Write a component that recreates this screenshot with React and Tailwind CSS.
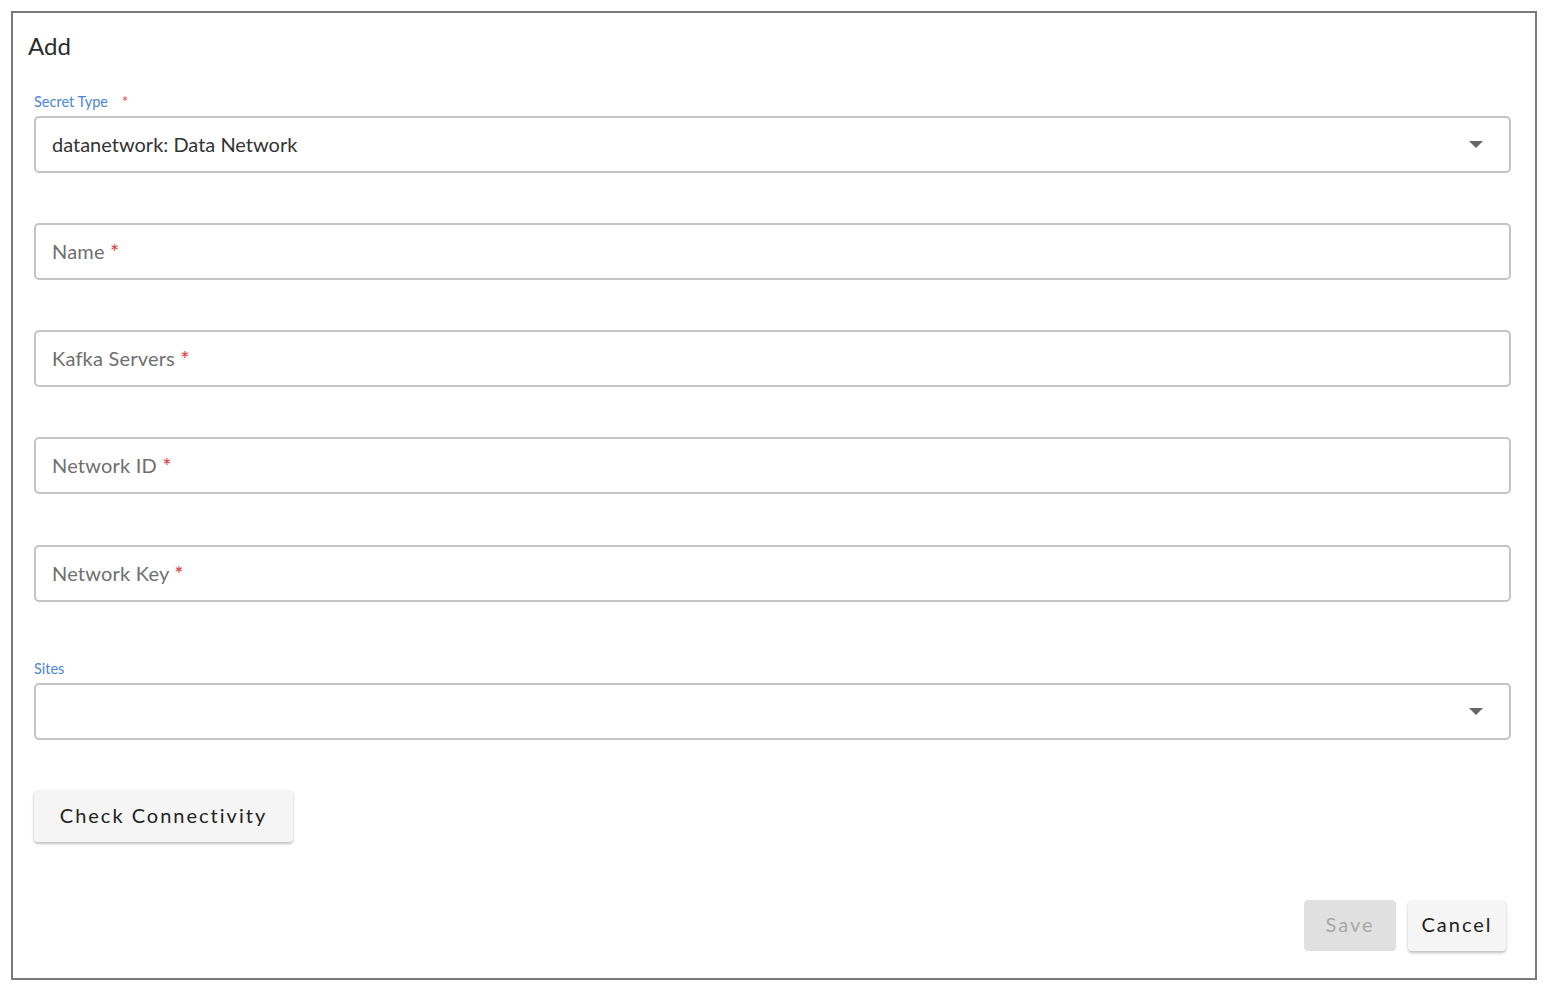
import React from "react";

const font = { fontFamily: "Lato, 'Open Sans', sans-serif" };

function Caret() {
  return (
    <svg width="14" height="8" viewBox="0 0 14 8" className="shrink-0">
      <path d="M0 0 L14 0 L7 7 Z" fill="#666" />
    </svg>
  );
}

function Field({ label, className = "" }) {
  return (
    <div
      className={`h-[57px] border-2 border-[#c4c4c4] rounded-[5px] flex items-center pl-4 ${className}`}
    >
      <span className="text-[20px] text-[#6f6f6f] tracking-[0.2px] -translate-y-[1.5px]">
        {label} <span className="text-[#e53935] text-[22px] relative top-[1px]">*</span>
      </span>
    </div>
  );
}

export default function App() {
  return (
    <div className="w-[1550px] h-[992px] bg-white p-[11px]" style={font}>
      <div className="h-[969px] w-[1526px] border-2 border-[#7a7a7a] pl-[21px] pr-[24px] pt-[19px] flex flex-col">
        <div className="text-[24px] leading-[28px] text-[#2b2b2b] -ml-[6px]">Add</div>

        <div className="mt-[34px] mb-[6px] text-[14.5px] leading-[16px] text-[#4a86d8] flex">
          <span>Secret Type</span>
          <span className="text-[#e53935] ml-[14px]">*</span>
        </div>
        <div className="h-[57px] border-2 border-[#c4c4c4] rounded-[5px] flex items-center pl-4 pr-[26px] justify-between">
          <span className="text-[20px] text-[#333] -translate-y-[1.5px]">datanetwork: Data Network</span>
          <Caret />
        </div>

        <Field label="Name" className="mt-[50px]" />
        <Field label="Kafka Servers" className="mt-[50px]" />
        <Field label="Network ID" className="mt-[50px]" />
        <Field label="Network Key" className="mt-[51px]" />

        <div className="mt-[59px] mb-[6px] text-[14.5px] leading-[16px] text-[#4a86d8]">Sites</div>
        <div className="h-[57px] border-2 border-[#c4c4c4] rounded-[5px] flex items-center justify-end pr-[26px]">
          <Caret />
        </div>

        <div className="mt-[50px]">
          <button className="h-[52px] w-[259px] pb-[3px] bg-[#f5f5f5] rounded-[4px] shadow-[0_2px_3px_rgba(0,0,0,0.25)] text-[20px] tracking-[2px] text-[#222]">
            Check Connectivity
          </button>
        </div>

        <div className="mt-[58px] flex justify-end gap-[12px] pr-[5px]">
          <button className="h-[51px] w-[92px] pb-[3px] bg-[#e0e0e0] rounded-[4px] text-[20px] tracking-[2px] text-[#a8a8a8]">
            Save
          </button>
          <button className="h-[51px] w-[98px] pb-[3px] bg-[#f5f5f5] rounded-[4px] shadow-[0_2px_3px_rgba(0,0,0,0.25)] text-[20px] tracking-[2px] text-[#222]">
            Cancel
          </button>
        </div>
      </div>
    </div>
  );
}
